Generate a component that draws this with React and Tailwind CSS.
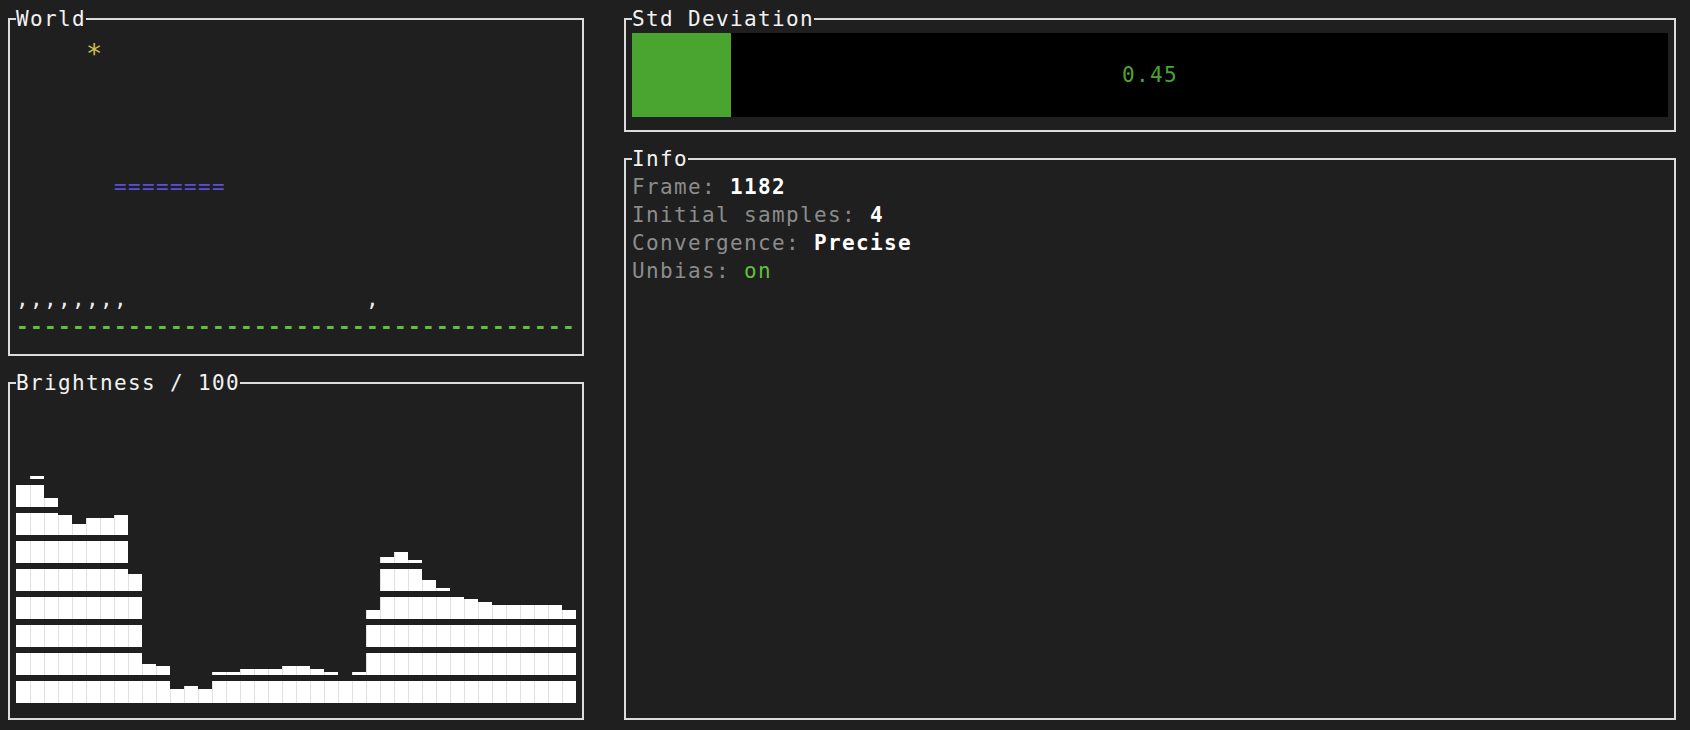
import clsx from "clsx";

// brightness per column, in eighths of a row
const brightness = [
  64, 65, 59, 55, 52, 54, 54, 55, 38, 12, 11, 5, 6, 5, 9, 9, 10, 10, 10, 11,
  11, 10, 9, 8, 9, 27, 42, 44, 41, 36, 33, 32, 31, 30, 29, 29, 29, 29, 29, 27,
];
const CHART_ROWS = 11;

function Panel({ title, className, children }) {
  return (
    <div className={clsx("relative border-2 border-[#dcdcdc] px-[6px] py-[13px]", className)}>
      <div className="absolute -top-[15px] left-[6px] bg-[#1f1f1f] whitespace-pre text-[#f2f2f2]">{title}</div>
      {children}
    </div>
  );
}

function Row({ children, className }) {
  return <div className={clsx("h-[28px] whitespace-pre", className)}>{children}</div>;
}

function World() {
  return (
    <Panel title="World">
      <Row>
        {"     "}
        <span className="inline-block w-[14px] translate-y-[7px] text-center text-[27px] tracking-normal text-[#c9c14b]">*</span>
      </Row>
      <Row />
      <Row />
      <Row />
      <Row />
      <Row className="text-[#5b4fda]">{"       ========"}</Row>
      <Row />
      <Row />
      <Row />
      <Row className="text-[#eeeeee]">{",,,,,,,,                 ,"}</Row>
      <Row className="font-bold text-[#5fbf3f]">{"-".repeat(40)}</Row>
    </Panel>
  );
}

function Brightness() {
  const rows = Array.from({ length: CHART_ROWS }, (_, i) => CHART_ROWS - 1 - i);
  return (
    <Panel title="Brightness / 100">
      {rows.map((level) => (
        <div key={level} className="flex h-[28px]">
          {brightness.map((v, i) => {
            const fill = Math.max(0, Math.min(8, v - level * 8));
            return (
              <div key={i} className="flex h-[28px] w-[14px] flex-col justify-end pb-[2.3px]">
                {fill > 0 && (
                  <div
                    className={clsx("bg-white", i > 0 && "border-l border-[#e0e0e0]")}
                    style={{ height: `${fill * 2.75}px` }}
                  />
                )}
              </div>
            );
          })}
        </div>
      ))}
    </Panel>
  );
}

function StdDeviation() {
  return (
    <Panel title="Std Deviation">
      <div className="relative flex h-[84px] items-center justify-center bg-black">
        <div className="absolute left-0 top-0 h-full w-[99px] bg-[#4aa430]" />
        <span className="relative text-[#4aa430]">0.45</span>
      </div>
    </Panel>
  );
}

function Info() {
  return (
    <Panel title="Info" className="h-[562px]">
      <Row>
        <span className="text-[#8c8c8c]">Frame: </span>
        <span className="font-bold text-white">1182</span>
      </Row>
      <Row>
        <span className="text-[#8c8c8c]">Initial samples: </span>
        <span className="font-bold text-white">4</span>
      </Row>
      <Row>
        <span className="text-[#8c8c8c]">Convergence: </span>
        <span className="font-bold text-white">Precise</span>
      </Row>
      <Row>
        <span className="text-[#8c8c8c]">Unbias: </span>
        <span className="text-[#5fbf3f]">on</span>
      </Row>
    </Panel>
  );
}

export default function App() {
  return (
    <div className="flex h-[730px] w-[1690px] gap-[40px] overflow-hidden bg-[#1f1f1f] pl-[8px] pt-[18px] font-['DejaVu_Sans_Mono',monospace] text-[21px] leading-[28px] tracking-[1.36px] text-[#f0f0f0]">
      <div className="flex w-[576px] flex-col gap-[26px]">
        <World />
        <Brightness />
      </div>
      <div className="flex w-[1052px] flex-col gap-[26px]">
        <StdDeviation />
        <Info />
      </div>
    </div>
  );
}
